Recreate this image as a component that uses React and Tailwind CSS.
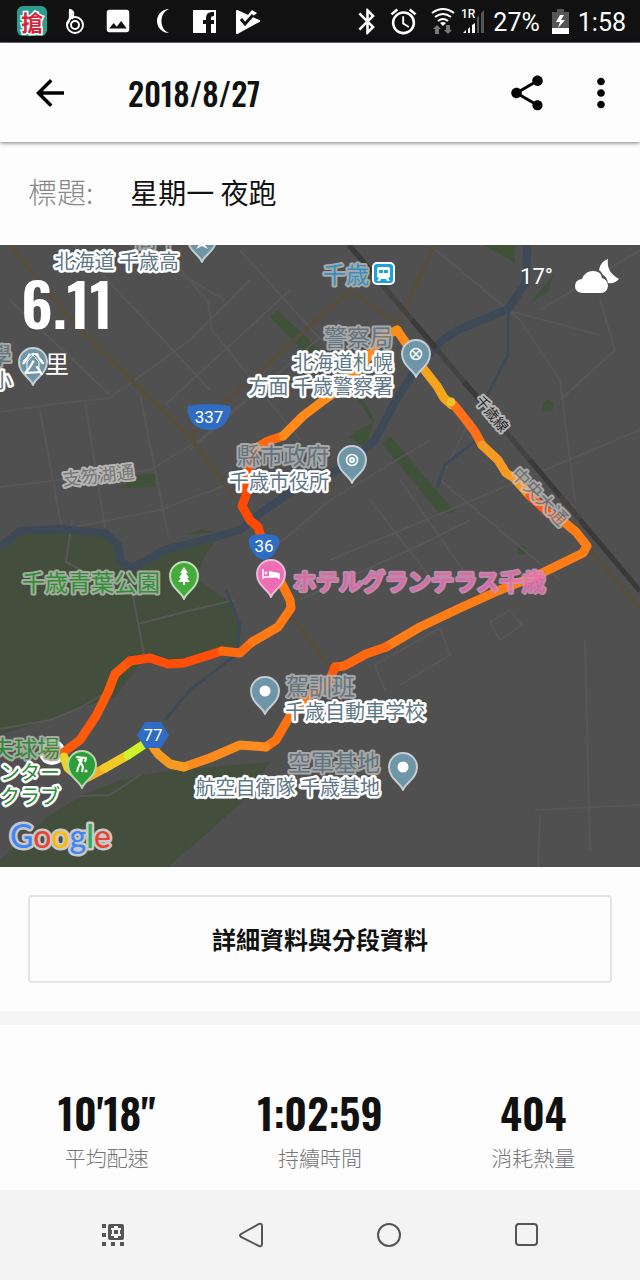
import {
  MdAlarm,
  MdArrowBack,
  MdBluetooth,
  MdImage,
  MdMoreVert,
  MdShare,
} from "react-icons/md";

// Route pieces, each with the colour of its pace
const route = [
  { color: "#ff5a0a", points: "64,752 80,740 96,716 108,692 115,674 130,661" },
  { color: "#ff4e08", points: "130,661 150,658 168,664 184,663 222,651" },
  { color: "#ff6a10", points: "222,651 240,653 252,642" },
  { color: "#ff7a14", points: "252,642 278,627 291,608 290,600 280,580" },
  { color: "#ff4a06", points: "262,540 258,527 250,520 242,506 247,492 246,474 256,448" },
  { color: "#ff6a10", points: "256,448 268,441 283,436" },
  { color: "#ff8a1a", points: "283,436 303,416 324,400 345,385 370,355 380,338 397,330" },
  { color: "#ff8c16", points: "397,330 414,355 426,372" },
  { color: "#f5a51c", points: "426,372 437,386 444,398 452,405" },
  { color: "#ff7018", points: "454,405 466,420 475,432 482,445" },
  { color: "#f59a22", points: "482,445 498,460 506,473 514,478 530,496" },
  { color: "#ff5a14", points: "530,496 550,514 564,522" },
  { color: "#ff7d16", points: "564,522 576,532 587,546 583,553 540,574 500,590" },
  { color: "#ff7d16", points: "500,590 460,608 420,627 386,647" },
  { color: "#ff680e", points: "386,647 366,654 344,666 335,667" },
  { color: "#ff5a0a", points: "335,667 328,684 306,698" },
  { color: "#ff7210", points: "306,698 290,716 276,740 266,747" },
  { color: "#ff8a1e", points: "266,747 240,745 210,758 184,767" },
  { color: "#f79a22", points: "184,767 170,764 158,754 151,744" },
  { color: "#f7b024", points: "105,768 88,777 78,776" },
  { color: "#f0c926", points: "128,755 105,768" },
  { color: "#cdf52a", points: "143,745 128,755" },
  { color: "#e8d22e", points: "78,776 68,768 64,757" },
];

const minorRoads = [
  "M0 412 L55 404 L110 398 L190 340 L250 280",
  "M0 487 L60 480 L150 470 L200 440 L245 400",
  "M60 530 L160 510 L245 478",
  "M72 520 L66 562 L90 575 L130 580 L145 660",
  "M40 410 L62 530 M85 402 L105 528 M140 395 L168 535",
  "M10 300 L110 395 M75 245 L210 390",
  "M160 245 L208 302 L212 330 L300 440 M240 250 L330 350",
  "M165 405 L290 290 M190 450 L340 320",
  "M225 300 L130 245 M260 560 L330 500 L430 440",
  "M330 560 L640 430",
  "M300 600 L420 545 L470 520",
  "M510 311 L600 335 M430 245 L520 320 L560 380 L575 500",
  "M540 310 L640 250 M560 400 L615 350 L600 300",
  "M470 420 L440 480 L560 580",
  "M370 500 L440 590 M400 480 L470 580",
  "M385 690 L375 665 L440 628 L450 655 L400 685",
  "M490 622 L510 610 L522 625 L500 640 Z",
  "M585 640 L590 850 M535 810 L640 805 M540 815 L538 867",
  "M138 624 L184 612 L235 600",
  "M0 729 L50 720 L80 708 L110 690",
  "M80 796 L110 795 L140 775",
];

function Pin({ x, y, color, border = "#c4cdd2", children }) {
  return (
    <g transform={`translate(${x} ${y})`}>
      <path
        d="M0 23C-2 16-14 12-14 0A14 14 0 1 1 14 0C14 12 2 16 0 23Z"
        fill={color}
        stroke={border}
        strokeWidth="2"
      />
      {children}
    </g>
  );
}

function Place({ x, y, end, children }) {
  return (
    <text
      x={x}
      y={y}
      textAnchor={end ? "end" : "start"}
      className="fill-[#5f7887] stroke-white stroke-5 text-[20px] [paint-order:stroke]"
    >
      {children}
    </text>
  );
}

function Category({ x, y, end, className = "fill-[#657985] stroke-[#b4b4b4]", children }) {
  return (
    <text
      x={x}
      y={y}
      textAnchor={end ? "end" : "start"}
      opacity="0.88"
      className={`stroke-4 text-[23px] [paint-order:stroke] ${className}`}
    >
      {children}
    </text>
  );
}

function RouteMap() {
  return (
    <svg
      viewBox="0 245 640 622"
      className="block w-full bg-[#505050] font-['Noto_Sans_CJK_JP',sans-serif]"
      strokeLinejoin="round"
    >
      {/* Parks */}
      <path
        d="M0 548L15 534L55 530L105 534L118 548L122 568L165 550L215 541L205 556L196 577L212 590L230 602L240 625L237 648L200 657L140 664L115 697L80 708L50 719L0 735Z"
        fill="#434f3c"
      />
      <path
        d="M0 867L0 860L50 815L83 795L120 780L160 772L200 768L270 762L245 800L168 867Z"
        fill="#434f3c"
      />
      <g fill="#40513a">
        <path d="M277 310L270 317L310 358L320 350Z" />
        <path d="M352 390L372 422L348 437L366 447L374 420L362 396Z" />
        <path d="M390 436L382 444L440 514L455 512Z" />
        <path d="M484 245L515 263L514 245Z" />
        <path d="M555 272L530 303L548 292Z" />
        <path d="M140 475L155 473L155 487L120 488Z" />
        <path d="M185 535L200 529L216 532Z" />
        <circle cx="548" cy="406" r="6" />
        <circle cx="522" cy="550" r="5" />
      </g>

      {/* Streets */}
      <g fill="none" stroke="#575757" strokeWidth="2">
        {minorRoads.map((d) => (
          <path key={d} d={d} />
        ))}
      </g>
      <g fill="none" stroke="#574f3c" strokeWidth="4">
        <path d="M10 245L80 330L190 437L235 497" />
        <path d="M435 245L398 322M350 290L398 325M350 290L209 417L190 437" />
        <path d="M292 618L332 670M590 550L640 608" />
      </g>

      {/* River */}
      <path
        d="M527 245L526 282L508 309L458 330L440 342L412 375L396 400L376 438L350 465L300 486L262 512L240 530L205 540L165 550L132 568L121 562L118 545L105 533L60 529L20 531L0 547"
        fill="none"
        stroke="#3d4956"
        strokeWidth="8"
      />
      <path
        d="M508 309L508 355L486 398M476 440L445 465L437 488M236 655L190 690L165 720M226 590L240 625L237 650"
        fill="none"
        stroke="#3f4a58"
        strokeWidth="3"
      />

      {/* Railway */}
      <path d="M349 245L640 591" stroke="#434343" strokeWidth="5" />
      <path
        d="M349 245L372 272M412 320L436 348M464 382L484 405M530 460L560 496M580 520L640 591"
        stroke="#3a3a3a"
        strokeWidth="5"
      />

      {/* Start point */}
      <circle cx="52" cy="752" r="11" fill="#f4563a" stroke="#fff" strokeWidth="4" />

      {/* Run */}
      <g fill="none" strokeWidth="9" strokeLinecap="round">
        {route.map((part) => (
          <polyline key={part.points} points={part.points} stroke={part.color} />
        ))}
        <circle cx="451" cy="402" r="2" stroke="#f0c42a" strokeWidth="5" />
      </g>

      {/* Road shields */}
      <g
        fill="#2f6cc4"
        className="text-[17px] font-['Roboto',sans-serif]"
        textAnchor="middle"
      >
        <path d="M188 406Q209 402 230 406Q232 412 228 418Q223 430 209 430Q195 430 190 418Q186 412 188 406Z" />
        <path d="M251 536Q264 532 277 536Q281 540 278 547Q274 558 264 560Q254 558 250 547Q247 540 251 536Z" />
        <path d="M145 722H161L169 735L161 748H145L137 735Z" />
        <g fill="#fff">
          <text x="209" y="423">337</text>
          <text x="264" y="552">36</text>
          <text x="153" y="741">77</text>
        </g>
      </g>

      {/* Pins */}
      <Pin x={202} y={239} color="#6f95a8">
        <path d="M-6 10L0 2L6 10L0 7Z" fill="#fff" />
      </Pin>
      <Pin x={33} y={362} color="#6f95a8">
        <path d="M-6 8V0L0-7L6 0V8M-10-1L0-9L10-1" fill="none" stroke="#fff" strokeWidth="1" />
      </Pin>
      <Pin x={416} y={354} color="#6f95a8">
        <circle r="5.5" fill="none" stroke="#fff" strokeWidth="1.5" />
        <path d="M-4-4L4 4M4-4L-4 4" stroke="#fff" strokeWidth="1.5" />
      </Pin>
      <Pin x={352} y={460} color="#6f95a8">
        <circle r="5.5" fill="none" stroke="#fff" strokeWidth="1.5" />
        <circle r="2" fill="none" stroke="#fff" strokeWidth="2" />
      </Pin>
      <Pin x={265} y={691} color="#6f95a8">
        <circle r="5.5" fill="#fff" />
      </Pin>
      <Pin x={403} y={767} color="#6f95a8">
        <circle r="5.5" fill="#fff" />
      </Pin>
      <Pin x={184} y={576} color="#45ac3c" border="#c0dcbb">
        <path d="M0-9L4-3H2L5 2H3L6 6H1V9H-1V6H-6L-3 2H-5L-2-3H-4Z" fill="#fff" />
      </Pin>
      <Pin x={271} y={574} color="#ee6db4" border="#e8bdd4">
        <path d="M-8-5V5M-8 3H8M8 5V-1" stroke="#fff" strokeWidth="1.5" />
        <path d="M-2-3L8-1V3H-2Z" fill="#fff" />
        <circle cx="-5" cy="-1" r="1.5" fill="#fff" />
      </Pin>
      <Pin x={82} y={765} color="#2f9e38" border="#b7d8b0">
        <path
          d="M-6-8L4-7L3-3M-4-6L-1-2L1 2L0 7M-2-2L-4 3L-5 7"
          fill="none"
          stroke="#fff"
          strokeWidth="2"
        />
        <circle cx="-1" cy="-5" r="2" fill="#fff" />
        <circle cx="4" cy="6" r="1.5" fill="#fff" />
      </Pin>

      {/* Station */}
      <Category x={369} y={283} end className="fill-[#2f9bd0] stroke-[#b4b4b4]">
        千歳
      </Category>
      <rect x="373" y="263" width="21" height="21" rx="4" fill="#1ba1dc" stroke="#fff" strokeWidth="2" />
      <path
        d="M379 267H388Q390 267 390 269V276Q390 278 388 278L390 281H387L386 279H381L380 281H377L379 278Q377 278 377 276V269Q377 267 379 267Z"
        fill="#fff"
      />
      <path d="M379 270H383V273H379ZM384 270H388V273H384Z" fill="#1ba1dc" />

      {/* Labels */}
      <Category x={180} y={247} end>高中</Category>
      <Place x={179} y={269} end>北海道 千歳高</Place>
      <Category x={12} y={364} end>學</Category>
      <Place x={12} y={388} end>小</Place>
      <Category x={393} y={346} end>警察局</Category>
      <Place x={393} y={370} end>北海道札幌</Place>
      <Place x={393} y={394} end>方面 千歳警察署</Place>
      <Category x={329} y={464} end>縣市政府</Category>
      <Place x={329} y={489} end>千歳市役所</Place>
      <Category x={286} y={695}>駕訓班</Category>
      <Place x={285} y={719}>千歳自動車学校</Place>
      <Category x={380} y={771} end>空軍基地</Category>
      <Place x={380} y={795} end>航空自衛隊 千歳基地</Place>
      <Category x={160} y={591} end className="fill-[#2f9a36] stroke-[#b0b8ac]">
        千歳青葉公園
      </Category>
      <Category x={293} y={590} className="fill-[#ee6db4] stroke-[#c993b4] font-medium">
        ホテルグランテラス千歳
      </Category>
      <Category x={60} y={757} end className="fill-[#2b8f35] stroke-[#b0b8ac]">
        高爾夫球場
      </Category>
      <g
        textAnchor="end"
        className="fill-[#2b8f35] stroke-white stroke-5 text-[20px] [paint-order:stroke]"
      >
        <text x="60" y="780">インター</text>
        <text x="60" y="804">クラブ</text>
      </g>
      <g
        textAnchor="middle"
        className="stroke-4 text-[18px] [paint-order:stroke]"
      >
        <text transform="translate(99 482) rotate(-6)" className="fill-[#777] stroke-[#b4b4b4]">
          支笏湖通
        </text>
        <text
          transform="translate(535 501) rotate(46)"
          className="fill-[#777] stroke-[#c4c4c4]"
          opacity="0.75"
        >
          中央大通
        </text>
        <text transform="translate(488 417) rotate(50)" className="fill-[#222] stroke-[#b4b4b4] text-[14px]">
          千歳線
        </text>
      </g>

      <text
        x="10"
        y="848"
        className="stroke-[#c8c8c8] stroke-5 text-[32px] font-medium font-['Lato',sans-serif] [paint-order:stroke]"
      >
        <tspan fill="#4285f4">G</tspan>
        <tspan fill="#ea4335">o</tspan>
        <tspan fill="#fbbc05">o</tspan>
        <tspan fill="#4285f4">g</tspan>
        <tspan fill="#34a853">l</tspan>
        <tspan fill="#ea4335">e</tspan>
      </text>
    </svg>
  );
}

function StatusBar() {
  return (
    <div className="flex h-[43px] items-center justify-between border-b border-gray-500 bg-[#111] pr-[14px] pl-[17px] text-white">
      <div className="flex items-center gap-[13px]">
        <span className="grid size-[30px] place-items-center rounded-md bg-[#2a9d8f] text-[22px] leading-none font-bold text-[#d3263c] [-webkit-text-stroke:3px_white] [paint-order:stroke]">
          搶
        </span>
        <svg viewBox="0 0 30 30" className="size-[30px]" fill="none" stroke="#fff" strokeWidth="2">
          <circle cx="15" cy="19" r="8" />
          <circle cx="15" cy="19" r="4" />
          <path d="M7 18C12 13 9 9 10 4C14 5 14 8 12 13M11 4V12" />
        </svg>
        <MdImage className="size-[30px]" />
        <svg viewBox="0 0 30 30" className="size-[30px]" fill="#fff">
          <path d="M23 3A12 12 0 1 0 23 27C13 23 13 7 23 3Z" />
        </svg>
        <svg viewBox="0 0 30 30" className="size-[30px]">
          <path fill="#fff" d="M4 4H27V27H22V18H25V14H22V12Q22 10 25 10V6Q17 5 17 12V14H14V18H17V27H4Z" />
        </svg>
        <svg viewBox="0 0 30 30" className="size-[30px]">
          <path d="M5 5L27 15L5 27Z" fill="#fff" stroke="#fff" strokeWidth="2" strokeLinejoin="round" />
          <path d="M16 9L20 4L25 7L19 12Z" fill="#fff" />
          <path d="M9 13L13 18L21 9" fill="none" stroke="#111" strokeWidth="3" />
        </svg>
      </div>

      <div className="flex items-center font-['Roboto',sans-serif] text-[25px]">
        <MdBluetooth className="size-[31px]" />
        <MdAlarm className="ml-[5px] size-[31px]" />
        <svg viewBox="0 0 56 30" className="ml-3 h-[30px] w-[56px]">
          <g fill="none" stroke="#fff" strokeWidth="3">
            <path d="M1 7Q12-1 23 7M4 11Q12 5 20 11M7 15Q12 11 17 15" strokeWidth="2" />
          </g>
          <path d="M9 17Q12 15 15 17L12 20Z" fill="#fff" />
          <path d="M6 19L10 23H8V28H4V23H2ZM17 28L13 24H15V19H19V24H21Z" fill="#777" />
          <g fill="#fff">
            <path d="M32 27H35V24ZM37 27H39V21L37 23ZM41 27H44V17L41 19Z" />
          </g>
          <path d="M46 27H48V9L46 12ZM50 27H53V4L50 7Z" fill="#555" />
          <text x="30" y="12" fill="#fff" className="text-[12px] font-medium">
            1R
          </text>
        </svg>
        <span className="ml-[6px] pt-1">27%</span>
        <svg viewBox="0 0 17 26" className="mr-[9px] ml-3 h-[26px] w-[17px]">
          <path d="M5 1H12V4H17V26H0V4H5Z" fill="#555" />
          <path d="M0 20H17V26H0Z" fill="#fff" />
          <path d="M8 7L4 14H8L6 20L13 12H9L12 7Z" fill="#fff" />
        </svg>
        <span className="pt-1">1:58</span>
      </div>
    </div>
  );
}

const stats = [
  { value: "10'18\"", label: "平均配速" },
  { value: "1:02:59", label: "持續時間" },
  { value: "404", label: "消耗熱量" },
];

export default function App() {
  return (
    <div className="flex min-h-screen flex-col bg-[#fdfdfd] font-['Noto_Sans_CJK_TC',sans-serif] text-[#111]">
      <StatusBar />

      <header className="relative flex h-[99px] items-center bg-[#fdfdfd] pr-4 pl-[29px] shadow-[0_1px_4px_rgba(0,0,0,0.5)]">
        <button type="button" aria-label="返回">
          <MdArrowBack className="size-[42px] text-black" />
        </button>
        <h1 className="ml-[57px] font-['Oswald',sans-serif] text-[32px] font-medium">
          2018/8/27
        </h1>
        <button type="button" aria-label="分享" className="ml-auto">
          <MdShare className="size-[42px] text-black" />
        </button>
        <button type="button" aria-label="更多" className="ml-[30px]">
          <MdMoreVert className="size-[46px] text-black" />
        </button>
      </header>

      <div className="flex h-[103px] items-center gap-[37px] pb-1 pl-[28px] text-[29px]">
        <span className="font-light text-[#888]">標題:</span>
        <span className="text-[28px]">星期一 夜跑</span>
      </div>

      <section className="relative">
        <RouteMap />
        <div className="absolute top-[21px] left-[21px] text-white">
          <p className="font-['Oswald',sans-serif] text-[60px] leading-[72px] font-semibold">
            6.11
          </p>
          <p className="mt-[9px] text-[24px] leading-8">公里</p>
        </div>
        <div className="absolute top-[13px] right-[21px] flex items-center gap-[21px] font-['Roboto',sans-serif] text-[22px] text-white">
          17°
          <svg viewBox="0 0 45 36" className="h-9 w-[45px]" fill="#fff">
            <path d="M8 35Q1 34 1 28Q1 22 8 21Q11 13 19 13Q27 13 28 20Q34 22 34 28Q33 35 27 35Z" />
            <path d="M34 1Q32 14 45 21Q41 26 34 25Q33 19 29 17Q27 13 25 12Q26 4 34 1Z" />
          </svg>
        </div>
      </section>

      <div className="px-[28px] pt-[28px] pb-7">
        <button
          type="button"
          className="h-[88px] w-full rounded-sm border-2 border-[#e5e5e5] text-2xl font-bold"
        >
          詳細資料與分段資料
        </button>
      </div>

      <div className="h-[14px] bg-[#f5f5f5]" />

      <dl className="grid flex-1 grid-cols-3 pt-[58px] text-center">
        {stats.map((stat) => (
          <div key={stat.label} className="flex flex-col-reverse justify-end">
            <dt className="text-[21px] leading-8 font-light text-[#777]">{stat.label}</dt>
            <dd className="font-['Oswald',sans-serif] text-[42px] leading-[58px] font-semibold">
              {stat.value}
            </dd>
          </div>
        ))}
      </dl>

      <nav className="grid h-[90px] grid-cols-4 place-items-center bg-[#f3f3f3] px-11">
        <button type="button" aria-label="選單">
          <svg viewBox="0 0 24 28" className="h-7 w-6" fill="#555">
            <path
              fillRule="evenodd"
              d="M9 3H21Q23 3 23 5V17Q23 19 21 19H9Q7 19 7 17V5Q7 3 9 3ZM13 5V7H10V9H11V13H10V15H13V17H17V15H20V13H19V9H20V7H17V5ZM13 9H17V13H13Z"
            />
            <path d="M1 3H5V7H1ZM1 12H5V16H1ZM1 21H5V25H1ZM10 21H14V25H10ZM19 21H23V25H19Z" />
          </svg>
        </button>
        <button type="button" aria-label="上一頁">
          <svg viewBox="0 0 24 28" className="h-7 w-6" fill="none" stroke="#555" strokeWidth="2">
            <path d="M2 13L20 3Q23 2 23 5V23Q23 26 20 25L2 16Q0 14 2 13Z" />
          </svg>
        </button>
        <button type="button" aria-label="主畫面">
          <svg viewBox="0 0 24 28" className="h-7 w-6" fill="none" stroke="#555" strokeWidth="2">
            <circle cx="12" cy="14" r="11" />
          </svg>
        </button>
        <button type="button" aria-label="最近使用">
          <svg viewBox="0 0 24 28" className="h-7 w-6" fill="none" stroke="#555" strokeWidth="2">
            <rect x="1" y="3" width="21" height="21" rx="3" />
          </svg>
        </button>
      </nav>
    </div>
  );
}
